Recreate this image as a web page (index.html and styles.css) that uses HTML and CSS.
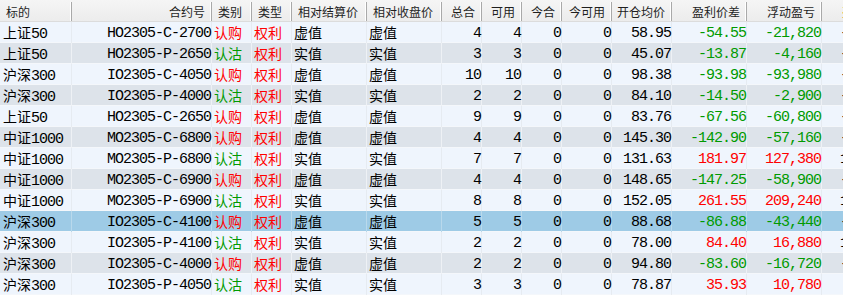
FILE: index.html
```html
<!DOCTYPE html>
<html lang="zh">
<head>
<meta charset="utf-8">
<title>持仓</title>
<link rel="stylesheet" href="styles.css">
</head>
<body>
<div class="grid">
  <div class="row head">
    <div class="c l">标的</div>
    <div class="c r">合约号</div>
    <div class="c l">类别</div>
    <div class="c l">类型</div>
    <div class="c l">相对结算价</div>
    <div class="c l">相对收盘价</div>
    <div class="c r">总合</div>
    <div class="c r">可用</div>
    <div class="c r">今合</div>
    <div class="c r">今可用</div>
    <div class="c r">开仓均价</div>
    <div class="c r">盈利价差</div>
    <div class="c r">浮动盈亏</div>
    <div class="c r hot">盈亏比例</div>
  </div>

  <div class="row odd">
    <div class="c l first"><span class="cn">上证</span>50</div><div class="c r">HO2305-C-2700</div><div class="c l red"><span class="cn">认购</span></div><div class="c l red"><span class="cn">权利</span></div><div class="c l"><span class="cn">虚值</span></div><div class="c l"><span class="cn">虚值</span></div><div class="c r">4</div><div class="c r">4</div><div class="c r">0</div><div class="c r">0</div><div class="c r">58.95</div><div class="c r green">-54.55</div><div class="c r green">-21,820</div><div class="c r">-92.53%</div>
  </div>
  <div class="row even">
    <div class="c l first"><span class="cn">上证</span>50</div><div class="c r">HO2305-P-2650</div><div class="c l green"><span class="cn">认沽</span></div><div class="c l red"><span class="cn">权利</span></div><div class="c l"><span class="cn">实值</span></div><div class="c l"><span class="cn">实值</span></div><div class="c r">3</div><div class="c r">3</div><div class="c r">0</div><div class="c r">0</div><div class="c r">45.07</div><div class="c r green">-13.87</div><div class="c r green">-4,160</div><div class="c r">-30.77%</div>
  </div>
  <div class="row odd">
    <div class="c l first"><span class="cn">沪深</span>300</div><div class="c r">IO2305-C-4050</div><div class="c l red"><span class="cn">认购</span></div><div class="c l red"><span class="cn">权利</span></div><div class="c l"><span class="cn">虚值</span></div><div class="c l"><span class="cn">虚值</span></div><div class="c r">10</div><div class="c r">10</div><div class="c r">0</div><div class="c r">0</div><div class="c r">98.38</div><div class="c r green">-93.98</div><div class="c r green">-93,980</div><div class="c r">-95.53%</div>
  </div>
  <div class="row even">
    <div class="c l first"><span class="cn">沪深</span>300</div><div class="c r">IO2305-P-4000</div><div class="c l green"><span class="cn">认沽</span></div><div class="c l red"><span class="cn">权利</span></div><div class="c l"><span class="cn">实值</span></div><div class="c l"><span class="cn">实值</span></div><div class="c r">2</div><div class="c r">2</div><div class="c r">0</div><div class="c r">0</div><div class="c r">84.10</div><div class="c r green">-14.50</div><div class="c r green">-2,900</div><div class="c r">-17.24%</div>
  </div>
  <div class="row odd">
    <div class="c l first"><span class="cn">上证</span>50</div><div class="c r">HO2305-C-2650</div><div class="c l red"><span class="cn">认购</span></div><div class="c l red"><span class="cn">权利</span></div><div class="c l"><span class="cn">虚值</span></div><div class="c l"><span class="cn">虚值</span></div><div class="c r">9</div><div class="c r">9</div><div class="c r">0</div><div class="c r">0</div><div class="c r">83.76</div><div class="c r green">-67.56</div><div class="c r green">-60,800</div><div class="c r">-80.66%</div>
  </div>
  <div class="row even">
    <div class="c l first"><span class="cn">中证</span>1000</div><div class="c r">MO2305-C-6800</div><div class="c l red"><span class="cn">认购</span></div><div class="c l red"><span class="cn">权利</span></div><div class="c l"><span class="cn">虚值</span></div><div class="c l"><span class="cn">虚值</span></div><div class="c r">4</div><div class="c r">4</div><div class="c r">0</div><div class="c r">0</div><div class="c r">145.30</div><div class="c r green">-142.90</div><div class="c r green">-57,160</div><div class="c r">-98.35%</div>
  </div>
  <div class="row odd">
    <div class="c l first"><span class="cn">中证</span>1000</div><div class="c r">MO2305-P-6800</div><div class="c l green"><span class="cn">认沽</span></div><div class="c l red"><span class="cn">权利</span></div><div class="c l"><span class="cn">实值</span></div><div class="c l"><span class="cn">实值</span></div><div class="c r">7</div><div class="c r">7</div><div class="c r">0</div><div class="c r">0</div><div class="c r">131.63</div><div class="c r red">181.97</div><div class="c r red">127,380</div><div class="c r">138.24%</div>
  </div>
  <div class="row even">
    <div class="c l first"><span class="cn">中证</span>1000</div><div class="c r">MO2305-C-6900</div><div class="c l red"><span class="cn">认购</span></div><div class="c l red"><span class="cn">权利</span></div><div class="c l"><span class="cn">虚值</span></div><div class="c l"><span class="cn">虚值</span></div><div class="c r">4</div><div class="c r">4</div><div class="c r">0</div><div class="c r">0</div><div class="c r">148.65</div><div class="c r green">-147.25</div><div class="c r green">-58,900</div><div class="c r">-99.06%</div>
  </div>
  <div class="row odd">
    <div class="c l first"><span class="cn">中证</span>1000</div><div class="c r">MO2305-P-6900</div><div class="c l green"><span class="cn">认沽</span></div><div class="c l red"><span class="cn">权利</span></div><div class="c l"><span class="cn">实值</span></div><div class="c l"><span class="cn">实值</span></div><div class="c r">8</div><div class="c r">8</div><div class="c r">0</div><div class="c r">0</div><div class="c r">152.05</div><div class="c r red">261.55</div><div class="c r red">209,240</div><div class="c r">172.02%</div>
  </div>
  <div class="row sel">
    <div class="c l first"><span class="cn">沪深</span>300</div><div class="c r">IO2305-C-4100</div><div class="c l red"><span class="cn">认购</span></div><div class="c l red"><span class="cn">权利</span></div><div class="c l"><span class="cn">虚值</span></div><div class="c l"><span class="cn">虚值</span></div><div class="c r">5</div><div class="c r">5</div><div class="c r">0</div><div class="c r">0</div><div class="c r">88.68</div><div class="c r green">-86.88</div><div class="c r green">-43,440</div><div class="c r">-97.97%</div>
  </div>
  <div class="row odd">
    <div class="c l first"><span class="cn">沪深</span>300</div><div class="c r">IO2305-P-4100</div><div class="c l green"><span class="cn">认沽</span></div><div class="c l red"><span class="cn">权利</span></div><div class="c l"><span class="cn">实值</span></div><div class="c l"><span class="cn">实值</span></div><div class="c r">2</div><div class="c r">2</div><div class="c r">0</div><div class="c r">0</div><div class="c r">78.00</div><div class="c r red">84.40</div><div class="c r red">16,880</div><div class="c r">108.21%</div>
  </div>
  <div class="row even">
    <div class="c l first"><span class="cn">沪深</span>300</div><div class="c r">IO2305-C-4000</div><div class="c l red"><span class="cn">认购</span></div><div class="c l red"><span class="cn">权利</span></div><div class="c l"><span class="cn">虚值</span></div><div class="c l"><span class="cn">虚值</span></div><div class="c r">2</div><div class="c r">2</div><div class="c r">0</div><div class="c r">0</div><div class="c r">94.80</div><div class="c r green">-83.60</div><div class="c r green">-16,720</div><div class="c r">-88.19%</div>
  </div>
  <div class="row odd">
    <div class="c l first"><span class="cn">沪深</span>300</div><div class="c r">IO2305-P-4050</div><div class="c l green"><span class="cn">认沽</span></div><div class="c l red"><span class="cn">权利</span></div><div class="c l"><span class="cn">实值</span></div><div class="c l"><span class="cn">实值</span></div><div class="c r">3</div><div class="c r">3</div><div class="c r">0</div><div class="c r">0</div><div class="c r">78.87</div><div class="c r red">35.93</div><div class="c r red">10,780</div><div class="c r">45.56%</div>
  </div>
</div>
</body>
</html>
```

FILE: styles.css
```css
html, body {
  margin: 0;
  padding: 0;
  overflow: hidden;
  background: #f0f6fd;
}

.grid {
  display: flex;
  flex-direction: column;
  width: 896px;
}

.row {
  display: grid;
  grid-template-columns: 72px 140px 40px 40px 75px 75px 40px 40px 40px 50px 60px 75px 75px 75px;
  height: 21px;
  box-sizing: border-box;
  border-bottom: 1px solid #f4f7fb;
  font-family: "Liberation Mono", "DejaVu Sans Mono", monospace;
  font-size: 15px;
  letter-spacing: -1px;
  color: #000;
}

.row .c {
  display: block;
  padding-top: 3px;
  line-height: 17px;
  box-sizing: border-box;
  border-right: 1px solid #e6ebf1;
  white-space: nowrap;
}

.row .c.l { text-align: left; padding-left: 2px; }
.row .c.r { text-align: right; padding-right: 0; }
.row .c.first { padding-left: 3px; }

.cn {
  font-family: "Noto Sans CJK SC", sans-serif;
  font-size: 14px;
  line-height: 14px;
  letter-spacing: 0;
}

.odd { background: #eff5fd; }
.even { background: #dde3ea; }
.sel { background: #9ecbe6; }
.sel .c { border-right-color: #b9d9ec; }
.even .c { border-right-color: #eef1f5; }

.red { color: #ff0000; }
.green { color: #009a00; }

.row.head {
  height: 22px;
  background: linear-gradient(#f5f5f5, #ececec);
  border-bottom: 1px solid #dcdcdc;
  font-family: "Noto Sans CJK SC", sans-serif;
  font-size: 12px;
  letter-spacing: 0;
  color: #1e1e1e;
}

.row.head .c {
  padding-top: 0;
  line-height: 19px;
  border-right: 1px solid #a9a9a9;
  box-shadow: inset -1px 0 0 #ffffff;
  margin: 2px 0 0;
}

.row.head .c.l { padding-left: 6px; }
.row.head .c.r { padding-right: 6px; }
.row.head .c.hot { color: #f08c00; }
```
